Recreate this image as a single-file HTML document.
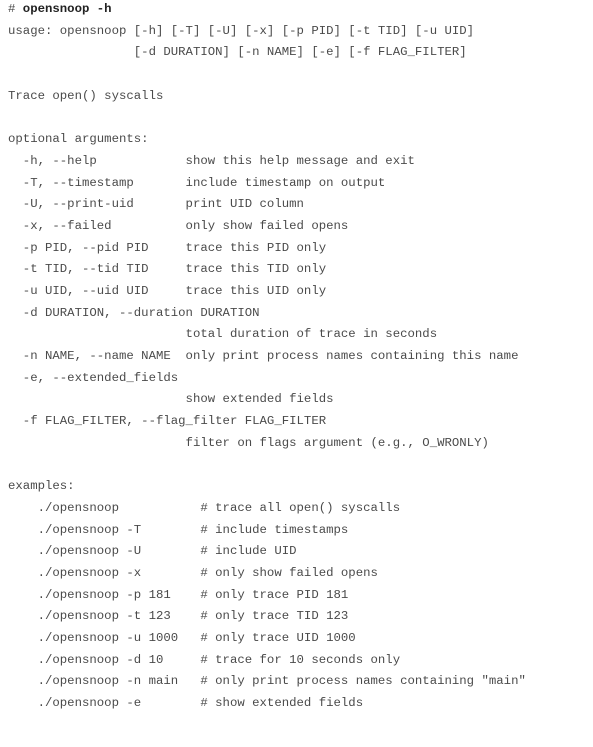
<!DOCTYPE html>
<html><head><meta charset="utf-8"><style>
html,body{margin:0;padding:0;background:#fff;width:593px;height:747px;overflow:hidden}
pre{position:absolute;left:8px;top:-1px;margin:0;font-family:"Liberation Mono",monospace;font-size:12.33px;line-height:21.68px;color:#4a4a4a}
b{color:#222}
</style></head><body><pre># <b>opensnoop -h</b>
usage: opensnoop [-h] [-T] [-U] [-x] [-p PID] [-t TID] [-u UID]
                 [-d DURATION] [-n NAME] [-e] [-f FLAG_FILTER]

Trace open() syscalls

optional arguments:
  -h, --help            show this help message and exit
  -T, --timestamp       include timestamp on output
  -U, --print-uid       print UID column
  -x, --failed          only show failed opens
  -p PID, --pid PID     trace this PID only
  -t TID, --tid TID     trace this TID only
  -u UID, --uid UID     trace this UID only
  -d DURATION, --duration DURATION
                        total duration of trace in seconds
  -n NAME, --name NAME  only print process names containing this name
  -e, --extended_fields
                        show extended fields
  -f FLAG_FILTER, --flag_filter FLAG_FILTER
                        filter on flags argument (e.g., O_WRONLY)

examples:
    ./opensnoop           # trace all open() syscalls
    ./opensnoop -T        # include timestamps
    ./opensnoop -U        # include UID
    ./opensnoop -x        # only show failed opens
    ./opensnoop -p 181    # only trace PID 181
    ./opensnoop -t 123    # only trace TID 123
    ./opensnoop -u 1000   # only trace UID 1000
    ./opensnoop -d 10     # trace for 10 seconds only
    ./opensnoop -n main   # only print process names containing "main"
    ./opensnoop -e        # show extended fields</pre></body></html>
